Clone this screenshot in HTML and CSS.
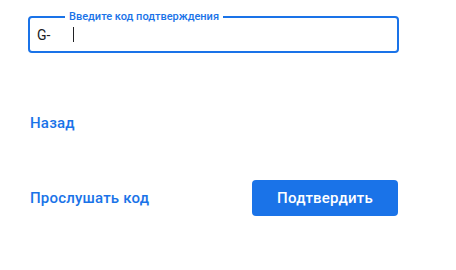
FILE: index.html
```html
<!DOCTYPE html>
<html lang="ru">
<head>
<meta charset="utf-8">
<link rel="stylesheet" href="styles.css">
</head>
<body>
<div class="page">
  <div class="field">
    <span class="field-label">Введите код подтверждения</span>
    <span class="prefix">G-</span>
    <span class="caret"></span>
  </div>
  <div class="back-row">
    <a class="link">Назад</a>
  </div>
  <div class="actions">
    <a class="link">Прослушать код</a>
    <button class="btn">Подтвердить</button>
  </div>
</div>
</body>
</html>
```
FILE: styles.css
```css
html, body {
  margin: 0;
  padding: 0;
  background: #fff;
}
body {
  font-family: Roboto, "Noto Sans", Arial, sans-serif;
  width: 456px;
  height: 270px;
  overflow: hidden;
}
.page {
  padding: 16px 0 0 28px;
  width: 371px;
}
.field {
  position: relative;
  box-sizing: border-box;
  height: 37px;
  border: 2px solid #1a73e8;
  border-radius: 4px;
  display: flex;
  align-items: center;
  padding-left: 7px;
}
.field-label {
  position: absolute;
  left: 35px;
  top: -8px;
  background: #fff;
  padding: 0 4px;
  font-size: 11px;
  line-height: 13px;
  color: #1a73e8;
  font-weight: 500;
}
.prefix {
  font-size: 14px;
  color: #202124;
  width: 36px;
}
.caret {
  width: 1px;
  height: 15px;
  background: #202124;
}
.back-row {
  margin-top: 61px;
  height: 18px;
  display: flex;
  align-items: center;
  padding-left: 2px;
}
.link {
  font-size: 15px;
  font-weight: 500;
  color: #1a73e8;
  letter-spacing: 0.2px;
}
.actions {
  margin-top: 48px;
  display: flex;
  align-items: center;
  justify-content: space-between;
  padding-left: 2px;
}
.btn {
  width: 146px;
  height: 36px;
  border: none;
  border-radius: 4px;
  background: #1a73e8;
  color: #fff;
  font-family: inherit;
  font-size: 15px;
  font-weight: 500;
  letter-spacing: 0.2px;
  margin-right: 1px;
}
```
